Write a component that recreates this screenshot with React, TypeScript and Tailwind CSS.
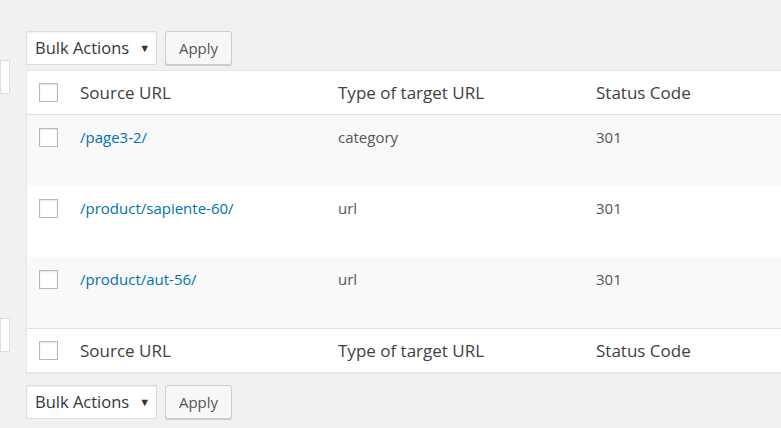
import React from "react";

const rows = [
  { url: "/page3-2/", type: "category", code: "301" },
  { url: "/product/sapiente-60/", type: "url", code: "301" },
  { url: "/product/aut-56/", type: "url", code: "301" },
];

const Check: React.FC = () => (
  <span className="block w-[19px] h-[19px] border border-[#b4b9be] bg-white shadow-[inset_0_1px_2px_rgba(0,0,0,0.1)]" />
);

const BulkBar: React.FC = () => (
  <div className="flex items-center gap-[8px]">
    <div className="flex items-center w-[131px] h-[34px] bg-white border border-[#ddd] shadow-[inset_0_1px_2px_rgba(0,0,0,0.07)] pl-[8px] text-[16.5px] text-[#32373c]">
      <span>Bulk Actions</span>
      <span className="ml-[10px] text-[11px] text-[#333]">▼</span>
    </div>
    <button className="h-[34px] w-[67px] border border-[#ccc] bg-[#f7f7f7] rounded-[3px] shadow-[0_1px_0_#ccc] text-[15px] text-[#555]">
      Apply
    </button>
  </div>
);

const HeadRow: React.FC<{ top?: boolean }> = ({ top }) => (
  <div
    className={`flex h-[44px] items-center text-[17px] text-[#3c4146] bg-white ${
      top ? "border-b border-[#e1e1e1]" : "border-t border-[#e1e1e1]"
    }`}
  >
    <div className="w-[44px] pl-[12px]">
      <Check />
    </div>
    <div className="w-[258px] pl-[9px]">Source URL</div>
    <div className="w-[258px] pl-[9px]">Type of target URL</div>
    <div className="w-[258px] pl-[9px]">Status Code</div>
  </div>
);

export default function App() {
  return (
    <div
      className="w-[781px] h-[428px] overflow-hidden bg-[#f1f1f1] flex"
      style={{ fontFamily: '"Open Sans", "Noto Sans", sans-serif' }}
    >
      <div className="w-[10px] shrink-0 flex flex-col">
        <div className="mt-[60px] h-[34px] bg-white border border-[#ddd]" />
        <div className="mt-[224px] h-[34px] bg-white border border-[#ddd]" />
      </div>
      <div className="ml-[16px] shrink-0 flex flex-col">
        <div className="mt-[31px]">
          <BulkBar />
        </div>
        <div className="mt-[5px] w-[820px] border border-[#e5e5e5] shadow-[0_1px_1px_rgba(0,0,0,0.04)] bg-white">
          <HeadRow top />
          {rows.map((r, i) => (
            <div
              key={r.url}
              className={`flex h-[71px] items-start pt-[11px] text-[15px] ${
                i % 2 === 0 ? "bg-[#f9f9f9]" : "bg-white"
              }`}
            >
              <div className="w-[44px] pl-[12px] pt-[2px]">
                <Check />
              </div>
              <div className="w-[258px] pl-[9px] text-[#0073aa]">{r.url}</div>
              <div className="w-[258px] pl-[9px] text-[#555]">{r.type}</div>
              <div className="w-[258px] pl-[9px] text-[#555]">{r.code}</div>
            </div>
          ))}
          <HeadRow />
        </div>
        <div className="mt-[12px]">
          <BulkBar />
        </div>
      </div>
    </div>
  );
}
